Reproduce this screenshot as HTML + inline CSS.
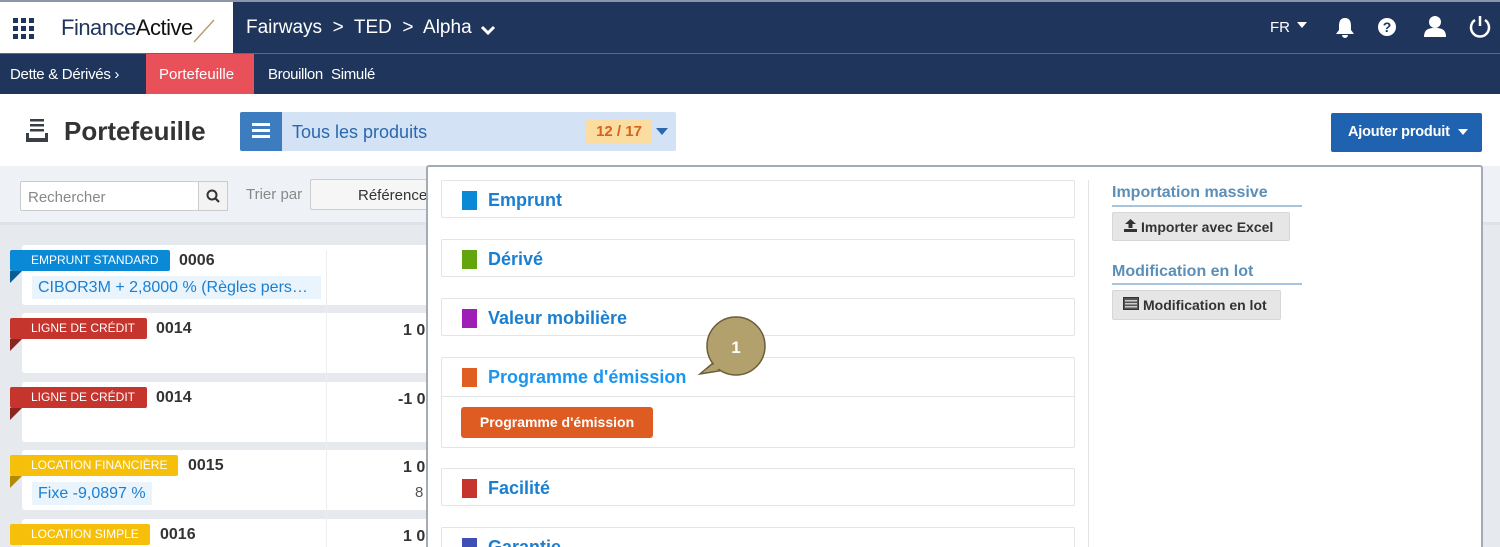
<!DOCTYPE html>
<html style="overflow:hidden"><head><meta charset="utf-8"><style>
*{box-sizing:border-box;margin:0;padding:0}
html,body{width:1500px;height:547px;overflow:hidden}
body{font-family:"Liberation Sans",sans-serif;background:#fff;position:relative}
.abs{position:absolute}
.top{left:0;top:0;width:1500px;height:54px;background:#1f355b;border-top:2px solid #8a96aa;border-bottom:1px solid #c0414b}
.logo{left:0;top:2px;width:233px;height:51px;background:#fff}
.nav2{left:0;top:54px;width:1500px;height:40px;background:#1f355b}
.nav2 span{position:absolute;top:12px;color:#fff;font-size:15px;white-space:nowrap}
.w{color:#fff}
.card{position:absolute;left:22px;width:408px;background:#fff;border-radius:3px}
.tag{position:absolute;left:10px;height:21px;color:#fff;font-size:12px;line-height:21px;padding-left:21px;border-radius:2px;white-space:nowrap}
.fold{position:absolute;left:10px;width:0;height:0;border-top:12px solid;border-left:12px solid transparent;transform:scaleX(-1)}
.num{position:absolute;font-weight:bold;font-size:16px;color:#333}
.pill{position:absolute;left:32px;height:23px;background:#eaf4fd;color:#1a7fd0;font-size:16px;padding:3px 6px;white-space:nowrap;overflow:hidden;text-overflow:ellipsis}
.sec{position:absolute;left:441px;width:634px;border:1px solid #e2e4e7;border-radius:2px;background:#fff}
.sec .sq{position:absolute;left:20px;top:10px;width:15px;height:19px}
.sec .t{position:absolute;left:46px;top:9px;font-size:18px;font-weight:bold;color:#1a7fd0;white-space:nowrap}
.gbtn{position:absolute;background:#e6e6e6;border:1px solid #d6d6d6;border-radius:2px;font-size:14px;font-weight:bold;color:#333;line-height:28px;padding-left:10px;white-space:nowrap}
</style></head><body>
<div class="abs top"></div>
<div class="abs logo">
 <svg class="abs" style="left:13px;top:16px" width="22" height="22"><g fill="#1f355b"><rect x="0" y="0" width="5" height="5"/><rect x="8" y="0" width="5" height="5"/><rect x="16" y="0" width="5" height="5"/><rect x="0" y="8" width="5" height="5"/><rect x="8" y="8" width="5" height="5"/><rect x="16" y="8" width="5" height="5"/><rect x="0" y="16" width="5" height="5"/><rect x="8" y="16" width="5" height="5"/><rect x="16" y="16" width="5" height="5"/></g></svg>
 <div class="abs" style="left:61px;top:13px;font-size:22px;color:#1f355b;letter-spacing:-0.5px;white-space:nowrap">Finance<b style="font-weight:normal;color:#111">Active</b></div>
 <svg class="abs" style="left:192px;top:16px" width="24" height="26"><line x1="2" y1="24" x2="22" y2="2" stroke="#b4a070" stroke-width="1.5"/></svg>
</div>
<div class="abs w" style="left:246px;top:17px;font-size:19px;white-space:nowrap">Fairways &nbsp;&gt;&nbsp; TED &nbsp;&gt;&nbsp; Alpha</div>
<svg class="abs" style="left:480px;top:24px" width="16" height="12"><path d="M2 3 L8 9 L14 3" stroke="#fff" stroke-width="3" fill="none"/></svg>
<div class="abs w" style="left:1270px;top:19px;font-size:15px">FR</div>
<svg class="abs" style="left:1297px;top:22px" width="10" height="6"><path d="M0 0H10L5 6Z" fill="#fff"/></svg>
<svg class="abs" style="left:1334px;top:16px" width="22" height="22"><path d="M11 2C6 2 5 6 5 10V14L2 18H20L17 14V10C17 6 16 2 11 2ZM8 19A3 3 0 0 0 14 19Z" fill="#fff"/></svg>
<svg class="abs" style="left:1377px;top:17px" width="20" height="20"><circle cx="10" cy="10" r="9" fill="#fff"/><text x="10" y="15" text-anchor="middle" font-size="14" font-weight="bold" fill="#1f355b" font-family="Liberation Sans">?</text></svg>
<svg class="abs" style="left:1423px;top:15px" width="24" height="22"><circle cx="12" cy="7" r="6" fill="#fff"/><path d="M1 22C1 14 6 13 12 13S23 14 23 22Z" fill="#fff"/></svg>
<svg class="abs" style="left:1468px;top:15px" width="24" height="24"><path d="M7 5A9 9 0 1 0 17 5" stroke="#fff" stroke-width="2.5" fill="none"/><line x1="12" y1="1" x2="12" y2="11" stroke="#fff" stroke-width="2.5"/></svg>

<div class="abs nav2">
 <span style="left:10px;letter-spacing:-0.3px">Dette &amp; Dérivés ›</span>
 <div class="abs" style="left:146px;top:0;width:108px;height:40px;background:#e9515a"></div>
 <span style="left:159px">Portefeuille</span>
 <span style="left:268px;letter-spacing:-0.4px">Brouillon</span>
 <span style="left:331px;letter-spacing:-0.3px">Simulé</span>
</div>

<svg class="abs" style="left:26px;top:119px" width="24" height="24"><g fill="#3a3f47"><rect x="4" y="0" width="14" height="2.5"/><rect x="4" y="5" width="14" height="2.5"/><rect x="4" y="10" width="14" height="2.5"/><path d="M0 14H3V19H19V14H22V23H0Z"/></g></svg>
<div class="abs" style="left:64px;top:116px;font-size:26px;font-weight:bold;color:#333">Portefeuille</div>
<div class="abs" style="left:240px;top:112px;width:436px;height:39px;background:#d3e3f5;border-radius:2px"></div>
<div class="abs" style="left:240px;top:112px;width:42px;height:39px;background:#3e7cc0;border-radius:2px 0 0 2px"></div>
<svg class="abs" style="left:252px;top:123px" width="18" height="16"><g fill="#fff"><rect y="0" width="18" height="3"/><rect y="6" width="18" height="3"/><rect y="12" width="18" height="3"/></g></svg>
<div class="abs" style="left:292px;top:122px;font-size:18px;color:#2a67ad">Tous les produits</div>
<div class="abs" style="left:586px;top:120px;width:66px;height:23px;background:#fbdca1;border-radius:2px;color:#d4631b;font-weight:bold;font-size:15px;text-align:center;line-height:23px">12 / 17</div>
<svg class="abs" style="left:656px;top:128px" width="12" height="7"><path d="M0 0H12L6 7Z" fill="#2a67ad"/></svg>
<div class="abs" style="left:1331px;top:113px;width:151px;height:39px;background:#1f63b0;border-radius:2px;color:#fff;font-weight:bold;font-size:14.5px;line-height:39px;padding-left:17px;letter-spacing:-0.2px;white-space:nowrap">Ajouter produit</div>
<svg class="abs" style="left:1458px;top:129px" width="10" height="6"><path d="M0 0H10L5 6Z" fill="#fff"/></svg>

<div class="abs" style="left:0;top:166px;width:1500px;height:381px;background:#eef1f5"></div>
<div class="abs" style="left:0;top:222px;width:1500px;height:3px;background:#dfe3e8"></div>
<div class="abs" style="left:0;top:225px;width:1500px;height:322px;background:#e6e9ed"></div>
<div class="abs" style="left:20px;top:181px;width:179px;height:30px;background:#fff;border:1px solid #ccc;border-radius:2px 0 0 2px;font-size:15px;color:#888;padding:7px 7px">Rechercher</div>
<div class="abs" style="left:198px;top:181px;width:30px;height:30px;background:#f3f3f3;border:1px solid #ccc"></div>
<svg class="abs" style="left:206px;top:189px" width="14" height="14"><circle cx="6" cy="6" r="4.5" stroke="#333" stroke-width="2" fill="none"/><line x1="9" y1="9" x2="13" y2="13" stroke="#333" stroke-width="2.2"/></svg>
<div class="abs" style="left:246px;top:186px;font-size:15px;color:#888">Trier par</div>
<div class="abs" style="left:310px;top:179px;width:130px;height:31px;background:#f6f6f6;border:1px solid #ccc;border-radius:2px;font-size:15px;color:#333;padding:7px 47px;white-space:nowrap">Référence</div>

<div class="card" style="top:245px;height:60px"></div>
<div class="card" style="top:313px;height:60px"></div>
<div class="card" style="top:382px;height:60px"></div>
<div class="card" style="top:450px;height:60px"></div>
<div class="card" style="top:519px;height:40px"></div>
<div class="abs" style="left:326px;top:250px;width:1px;height:300px;background:#eee"></div>

<div class="tag" style="top:250px;width:160px;background:#0a8ad6">EMPRUNT STANDARD</div><div class="fold" style="top:271px;border-top-color:#075e97"></div>
<div class="num" style="left:179px;top:252px">0006</div>
<div class="pill" style="top:276px;width:289px">CIBOR3M + 2,8000 % (Règles perso…</div>
<div class="tag" style="top:318px;width:137px;background:#c5342d">LIGNE DE CRÉDIT</div><div class="fold" style="top:339px;border-top-color:#8a2520"></div>
<div class="num" style="left:156px;top:320px">0014</div><div class="num" style="left:403px;top:322px">1 0</div>
<div class="tag" style="top:387px;width:137px;background:#c5342d">LIGNE DE CRÉDIT</div><div class="fold" style="top:408px;border-top-color:#8a2520"></div>
<div class="num" style="left:156px;top:389px">0014</div><div class="num" style="left:398px;top:391px">-1 0</div>
<div class="tag" style="top:455px;width:168px;background:#f6bf0a">LOCATION FINANCIÈRE</div><div class="fold" style="top:476px;border-top-color:#b38a05"></div>
<div class="num" style="left:188px;top:457px">0015</div><div class="num" style="left:403px;top:459px">1 0</div>
<div class="pill" style="top:482px;overflow:visible">Fixe -9,0897 %</div>
<div class="abs" style="left:415px;top:484px;font-size:15px;color:#555">8</div>
<div class="tag" style="top:524px;width:140px;background:#f6bf0a">LOCATION SIMPLE</div>
<div class="num" style="left:160px;top:526px">0016</div><div class="num" style="left:403px;top:528px">1 0</div>

<div class="abs" style="left:426px;top:165px;width:1057px;height:390px;background:#fff;border:2px solid #a3abb5;border-radius:3px"></div>
<div class="sec" style="top:180px;height:38px"><div class="sq" style="background:#0a8ad6"></div><div class="t">Emprunt</div></div>
<div class="sec" style="top:239px;height:38px"><div class="sq" style="background:#62a60d"></div><div class="t">Dérivé</div></div>
<div class="sec" style="top:298px;height:38px"><div class="sq" style="background:#9d1fb5"></div><div class="t">Valeur mobilière</div></div>
<div class="sec" style="top:357px;height:91px"><div class="sq" style="background:#e05e22"></div><div class="t" style="color:#1b96f0">Programme d'émission</div>
 <div class="abs" style="left:0;top:38px;width:632px;height:1px;background:#e2e4e7"></div>
 <div class="abs" style="left:19px;top:49px;width:192px;height:31px;background:#de5c21;border-radius:3px;color:#fff;font-weight:bold;font-size:14px;line-height:31px;text-align:center">Programme d'émission</div></div>
<div class="sec" style="top:468px;height:38px"><div class="sq" style="background:#c5342d"></div><div class="t">Facilité</div></div>
<div class="sec" style="top:527px;height:38px"><div class="sq" style="background:#3e4fb5"></div><div class="t">Garantie</div></div>
<div class="abs" style="left:1088px;top:180px;width:1px;height:367px;background:#e2e4e7"></div>

<div class="abs" style="left:1112px;top:184px;font-size:16px;font-weight:bold;color:#5b8fb8;white-space:nowrap">Importation massive</div>
<div class="abs" style="left:1112px;top:205px;width:190px;height:2px;background:#a8c4dc"></div>
<div class="gbtn" style="left:1112px;top:212px;width:178px;height:29px"><span style="padding-left:18px">Importer avec Excel</span></div>
<svg class="abs" style="left:1123px;top:218px" width="15" height="15"><path d="M7.5 1L2 6H5.5V10H9.5V6H13Z" fill="#333"/><rect x="1" y="11" width="13" height="3" fill="#333"/></svg>
<div class="abs" style="left:1112px;top:263px;font-size:16px;font-weight:bold;color:#5b8fb8;white-space:nowrap">Modification en lot</div>
<div class="abs" style="left:1112px;top:283px;width:190px;height:2px;background:#a8c4dc"></div>
<div class="gbtn" style="left:1112px;top:290px;width:169px;height:30px"><span style="padding-left:20px">Modification en lot</span></div>
<svg class="abs" style="left:1123px;top:297px" width="16" height="13"><rect x="0.5" y="0.5" width="15" height="12" fill="#555" stroke="#333"/><rect x="2" y="3" width="12" height="1.5" fill="#ccc"/><rect x="2" y="6" width="12" height="1.5" fill="#ccc"/><rect x="2" y="9" width="12" height="1.5" fill="#ccc"/></svg>

<svg class="abs" style="left:695px;top:314px" width="80" height="70"><path d="M5 60L24 44L36 55Z" fill="#b2a06d" stroke="#6b5d3a" stroke-width="1.5"/><circle cx="41" cy="32" r="29" fill="#b2a06d" stroke="#6b5d3a" stroke-width="1.5"/><path d="M8 58L25 46L33 53Z" fill="#b2a06d"/><text x="41" y="39" text-anchor="middle" font-family="Liberation Sans" font-weight="bold" font-size="17" fill="#fff">1</text></svg>
</body></html>
